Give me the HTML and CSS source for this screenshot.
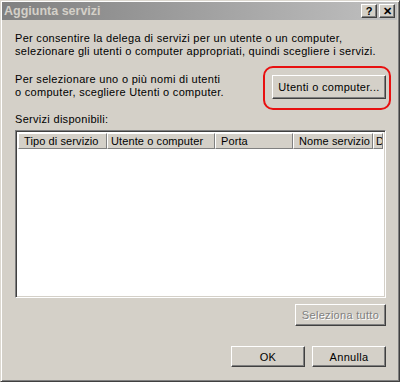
FILE: index.html
```html
<!DOCTYPE html>
<html lang="it">
<head>
	<meta charset="UTF-8">
	<title>Aggiunta servizi</title>
	<link rel="stylesheet" href="styles.css">
</head>
<body>
	<div class="window">
		<div class="titlebar">
			<span class="title">Aggiunta servizi</span>
			<div class="titlebtns">
				<span class="tbtn">?</span>
				<span class="tbtn">&#x2715;</span>
			</div>
		</div>
		<div class="content">
			<p class="intro">Per consentire la delega di servizi per un utente o un computer,<br>selezionare gli utenti o computer appropriati, quindi scegliere i servizi.</p>
			<div class="pickrow">
				<p>Per selezionare uno o più nomi di utenti<br>o computer, scegliere Utenti o computer.</p>
				<div class="ringwrap">
					<button class="btn btn-users">Utenti o computer...</button>
					<div class="ring"></div>
				</div>
			</div>
			<p class="listlabel">Servizi disponibili:</p>
			<div class="listview">
				<div class="header">
					<div class="col c1">Tipo di servizio</div>
					<div class="col c2">Utente o computer</div>
					<div class="col c3">Porta</div>
					<div class="col c4">Nome servizio</div>
					<div class="col c5">D</div>
				</div>
			</div>
			<div class="selrow">
				<button class="btn btn-sel" disabled>Seleziona tutto</button>
			</div>
			<div class="footer">
				<button class="btn btn-ok">OK</button>
				<button class="btn btn-cancel">Annulla</button>
			</div>
		</div>
	</div>
</body>
</html>
```

FILE: styles.css
```css
*{
	margin: 0;
	padding: 0;
	box-sizing: border-box;
}
body{
	font-family: "Liberation Sans", Arial, sans-serif;
	font-size: 11px;
	line-height: 13px;
	letter-spacing: 0.3px;
	color: #000;
	background: #d4d0c8;
}
.window{
	width: 400px;
	height: 382px;
	background: #d4d0c8;
	border: 1px solid;
	border-color: #dcd8d0 #404040 #404040 #dcd8d0;
	box-shadow: inset 1px 1px #fff, inset -1px -1px #808080;
	display: flex;
	flex-direction: column;
}
.titlebar{
	height: 18px;
	margin: 1px 2px 0 1px;
	padding: 0 2px 0 2px;
	background: linear-gradient(to right, #808080, #c0c0c0);
	display: flex;
	align-items: center;
	justify-content: space-between;
}
.title{
	color: #d4d0c8;
	font-weight: bold;
	font-size: 12.5px;
	letter-spacing: 0;
}
.titlebtns{
	display: flex;
	gap: 2px;
}
.tbtn{
	width: 16px;
	height: 14px;
	background: #d4d0c8;
	border: 1px solid;
	border-color: #fff #404040 #404040 #fff;
	box-shadow: inset -1px -1px #808080;
	font-size: 11px;
	font-weight: bold;
	line-height: 12px;
	letter-spacing: 0;
	text-align: center;
	color: #000;
}
.content{
	flex: 1;
	padding: 12px 13px 0 14px;
	display: flex;
	flex-direction: column;
}
.pickrow{
	margin-top: 15px;
	display: flex;
	justify-content: space-between;
	align-items: flex-start;
}
.ringwrap{
	position: relative;
	margin-top: 2px;
}
.ring{
	position: absolute;
	top: -9px;
	left: -9px;
	right: -5px;
	bottom: -11px;
	border: 2px solid #e81010;
	border-radius: 10px;
}
.btn{
	font-family: inherit;
	font-size: 11px;
	letter-spacing: 0.3px;
	color: #000;
	background: #d4d0c8;
	border: 1px solid;
	border-color: #fff #404040 #404040 #fff;
	box-shadow: inset -1px -1px #808080;
}
.btn-users{
	width: 114px;
	height: 24px;
	display: block;
}
.listlabel{
	margin-top: 14px;
}
.listview{
	margin-top: 4px;
	height: 168px;
	background: #fff;
	border: 1px solid;
	border-color: #808080 #fff #fff #808080;
	box-shadow: inset 1px 1px #404040, inset -1px -1px #d4d0c8;
	padding: 2px 2px 0 2px;
	overflow: hidden;
}
.header{
	display: flex;
	height: 16px;
	white-space: nowrap;
	overflow: hidden;
	letter-spacing: 0.1px;
}
.col{
	flex: none;
	background: #d4d0c8;
	border: 1px solid;
	border-color: #fff #808080 #808080 #fff;
	padding: 1px 0 0 5px;
	overflow: hidden;
}
.c1{ width: 89px; }
.c2{ width: 108px; padding-left: 3px; }
.c3{ width: 78px; }
.c4{ width: 80px; }
.c5{ flex: 1; padding-left: 2px; }
.selrow{
	margin-top: 6px;
	display: flex;
	justify-content: flex-end;
}
.btn-sel{
	width: 91px;
	height: 22px;
	color: #808080;
	text-shadow: 1px 1px #fff;
}
.footer{
	margin-top: 20px;
	display: flex;
	justify-content: flex-end;
	gap: 7px;
}
.btn-ok, .btn-cancel{
	width: 74px;
	height: 21px;
}
```
